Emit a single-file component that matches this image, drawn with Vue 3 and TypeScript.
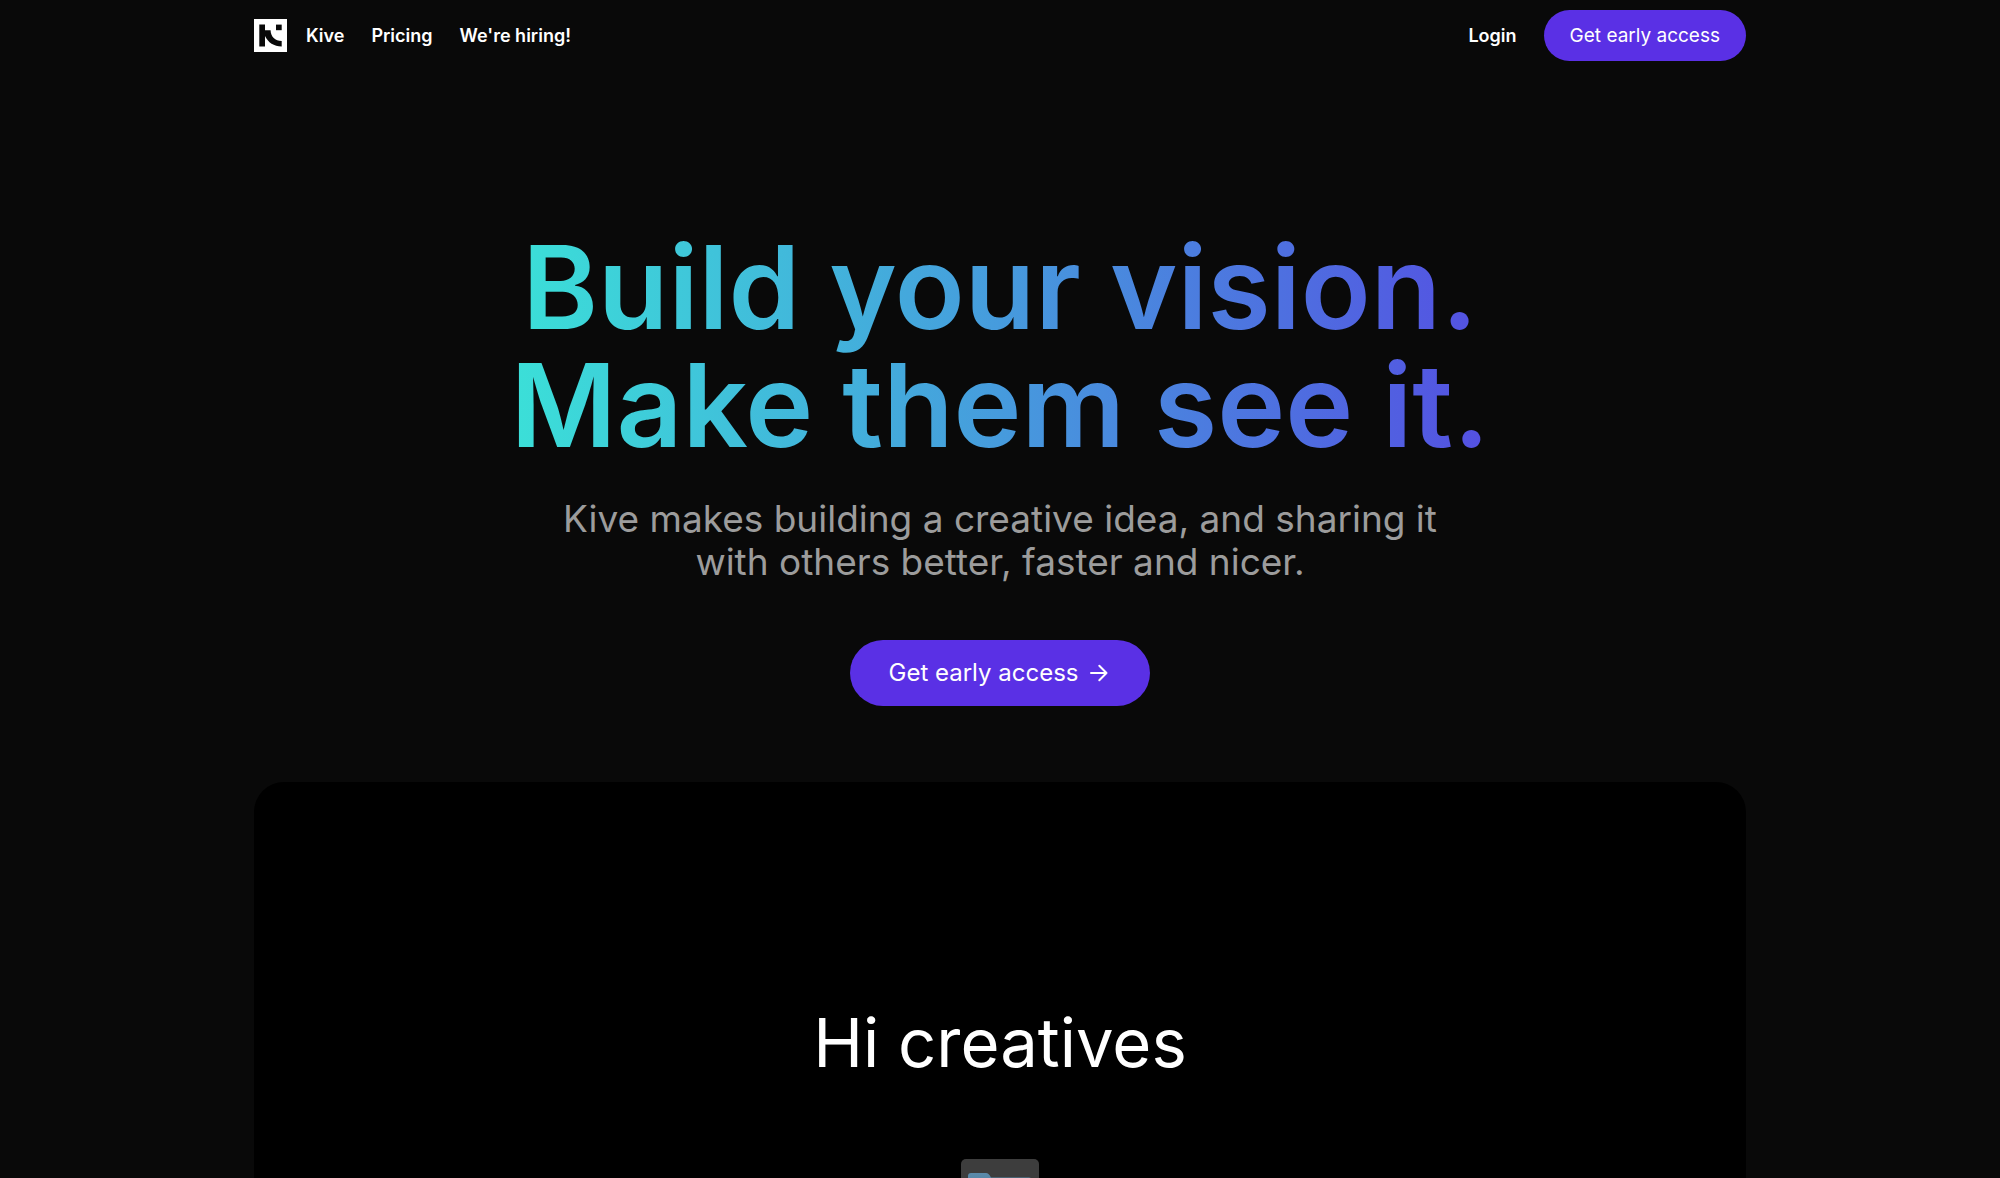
<script setup lang="ts">
interface NavLink {
  label: string
  href: string
}

const links: NavLink[] = [
  { label: 'Kive', href: '#kive' },
  { label: 'Pricing', href: '#pricing' },
  { label: "We're hiring!", href: '#hiring' },
]
</script>

<template>
  <div class="page">
    <header class="header container">
      <nav class="nav" aria-label="Main">
        <a class="logo" href="#home" aria-label="Home">
          <svg width="33" height="33" viewBox="0 0 33 33" aria-hidden="true">
            <rect width="33" height="33" fill="#fff" />
            <path fill="#090909" d="M5.3 5.4H11V11.2H16.6C16.6 17.4 21.2 22 27.7 22V27.5C20 27.5 14 23.4 11 17V27.5H5.3Z" />
            <rect x="22" y="5.6" width="5.7" height="5.6" fill="#090909" />
          </svg>
        </a>
        <a v-for="link in links" :key="link.label" class="nav-link" :href="link.href">{{ link.label }}</a>
      </nav>
      <div class="account">
        <a class="nav-link" href="#login">Login</a>
        <button class="button" type="button">Get early access</button>
      </div>
    </header>

    <main>
      <section class="hero">
        <h1 class="title">Build your vision.<br />Make them see it.</h1>
        <p class="lead">Kive makes building a creative idea, and sharing it<br />with others better, faster and nicer.</p>
        <button class="button button-large" type="button">
          <span>Get early access</span>
          <svg width="24" height="24" viewBox="0 0 24 24" fill="none" stroke="currentColor" stroke-width="2" stroke-linecap="round" stroke-linejoin="round" aria-hidden="true">
            <path d="M3 12H18.500M11.300 4.800L18.500 12L11.300 19.200" />
          </svg>
        </button>
      </section>

      <section class="preview container">
        <h2 class="preview-title">Hi creatives</h2>
        <svg class="folder" width="78" height="78" viewBox="0 0 78 78" aria-hidden="true">
          <defs>
            <linearGradient id="folderBlue" x1="0" y1="0" x2="0" y2="1">
              <stop offset="0" stop-color="#5a8aaa" />
              <stop offset="1" stop-color="#3f7196" />
            </linearGradient>
          </defs>
          <rect width="78" height="78" rx="5" fill="#3d3d3d" />
          <path fill="url(#folderBlue)" d="M7 17a3 3 0 0 1 3-3H25c2 0 3 1 5 4.500H68a3 3 0 0 1 3 3V62a3 3 0 0 1-3 3H10a3 3 0 0 1-3-3Z" />
        </svg>
      </section>
    </main>
  </div>
</template>

<style>
body {
  margin: 0;
  background: #090909;
}
</style>

<style scoped>
.page {
  height: 100vh;
  overflow: hidden;
  background: #090909;
  color: #fff;
  font-family: Inter, 'Liberation Sans', sans-serif;
}

.container {
  box-sizing: border-box;
  width: calc(100% - 48px);
  max-width: 1492px;
  margin: 0 auto;
}

.header {
  display: flex;
  align-items: center;
  justify-content: space-between;
  padding-top: 10px;
}

.nav,
.account {
  display: flex;
  align-items: center;
  gap: 27px;
}

.logo {
  display: flex;
  margin-right: -8px;
}

.nav-link {
  color: #fff;
  font-size: 18px;
  font-weight: 600;
  line-height: 24px;
  text-decoration: none;
}

.button {
  padding: 0 26px;
  border: 0;
  border-radius: 26px;
  background: #5a30e5;
  color: #fff;
  font-family: inherit;
  font-size: 19px;
  font-weight: 400;
  line-height: 51px;
  cursor: pointer;
}

.hero {
  display: flex;
  flex-direction: column;
  align-items: center;
  padding: 168px 24px 76px;
  text-align: center;
}

.title {
  margin: 0;
  background: linear-gradient(90deg, #3be0d8, #469bdd 50%, #5450e2);
  background-clip: text;
  -webkit-background-clip: text;
  color: transparent;
  font-size: 115px;
  font-weight: 600;
  line-height: 118px;
}

.lead {
  margin: 32px 0 57px;
  color: #9c9c9c;
  font-size: 37px;
  font-weight: 400;
  line-height: 43px;
}

.button-large {
  display: flex;
  align-items: center;
  gap: 9px;
  padding: 0 38px;
  border-radius: 33px;
  font-size: 24px;
  line-height: 66px;
}

.preview {
  display: flex;
  flex-direction: column;
  align-items: center;
  gap: 74px;
  aspect-ratio: 16 / 9;
  padding-top: 219px;
  border-radius: 30px;
  background: #000;
}

.preview-title {
  margin: 0;
  font-size: 67px;
  font-weight: 400;
  line-height: 84px;
}
</style>
